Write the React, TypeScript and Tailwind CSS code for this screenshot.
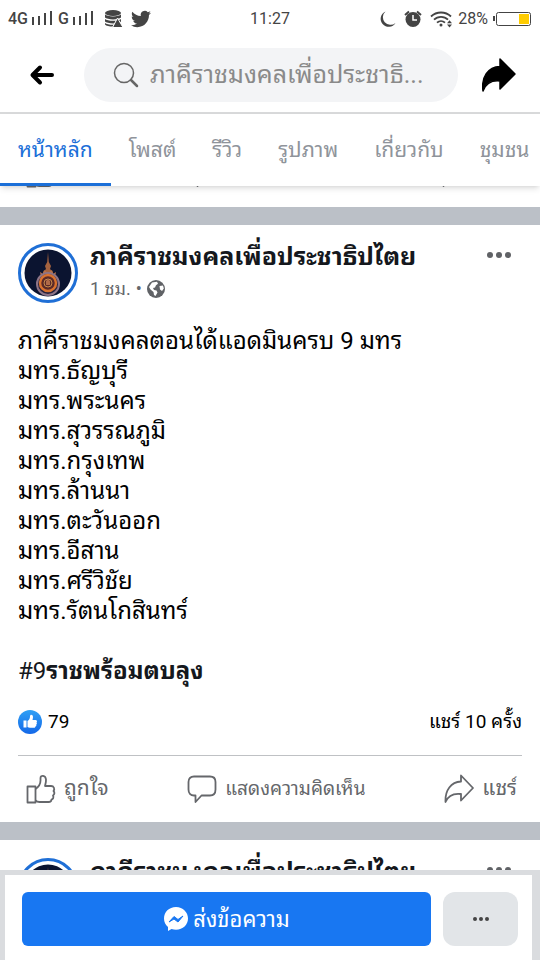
import React from "react";

const PAGE_NAME = "ภาคีราชมงคลเพื่อประชาธิปไตย";

const tabs = ["หน้าหลัก", "โพสต์", "รีวิว", "รูปภาพ", "เกี่ยวกับ", "ชุมชน"];

const campuses = [
  "มทร.ธัญบุรี",
  "มทร.พระนคร",
  "มทร.สุวรรณภูมิ",
  "มทร.กรุงเทพ",
  "มทร.ล้านนา",
  "มทร.ตะวันออก",
  "มทร.อีสาน",
  "มทร.ศรีวิชัย",
  "มทร.รัตนโกสินทร์",
];

const Signal = () => (
  <svg width="22" height="15" viewBox="0 0 22 15" fill="#444" aria-hidden="true">
    <rect x="0" y="6" width="2" height="8" />
    <rect x="6" y="5" width="2" height="9" />
    <rect x="12" y="2" width="2" height="12" />
    <rect x="18" y="0" width="2" height="14" />
  </svg>
);

const StatusBar = () => (
  <div className="grid grid-cols-[1fr_auto_1fr] items-center h-[37px] px-2 text-[#444]">
    <div className="flex items-center">
      <span className="mr-1 text-base font-medium">4G</span>
      <Signal />
      <span className="ml-1 mr-1 text-base font-medium">G</span>
      <Signal />
      <svg className="ml-[10px]" width="18" height="18" viewBox="0 0 18 18" aria-hidden="true">
        <ellipse cx="8" cy="3" rx="8" ry="3" fill="#444" />
        <path d="M0 4.6c2 2.4 14 2.4 16 0v3c-2 2.4-14 2.4-16 0zM0 9c2 2.4 14 2.4 16 0v2.6c-2 2.4-14 2.4-16 0zM0 13c2 2.4 14 2.4 16 0v1.5c-2 2.8-14 2.8-16 0z" fill="#444" />
        <path d="M12.500 8l5.500 9.500H7.500z" fill="#444" stroke="#fff" />
      </svg>
      <svg className="ml-2" width="20" height="20" viewBox="0 0 24 24" fill="#444" aria-hidden="true">
        <path d="M23.950 4.570a10 10 0 0 1-2.820.770 4.960 4.960 0 0 0 2.160-2.720c-.950.550-2 .960-3.130 1.180a4.920 4.920 0 0 0-8.380 4.480C7.690 8.090 4.070 6.130 1.640 3.160a4.820 4.820 0 0 0-.670 2.480c0 1.710.870 3.210 2.190 4.100a4.900 4.900 0 0 1-2.230-.620v.060a4.920 4.920 0 0 0 3.950 4.830 5 5 0 0 1-2.210.080 4.940 4.940 0 0 0 4.600 3.420A9.870 9.870 0 0 1 0 19.540a13.990 13.990 0 0 0 7.550 2.210c9.050 0 14-7.500 14-13.980 0-.210 0-.420-.020-.630a9.940 9.940 0 0 0 2.460-2.550z" />
      </svg>
    </div>
    <time className="text-base">11:27</time>
    <div className="flex items-center justify-end">
      <svg width="16" height="18" viewBox="0 0 16 18" fill="#444" aria-hidden="true">
        <path d="M5.500 1.500A7.500 7.500 0 0 0 15.500 13 8 8 0 1 1 5.500 1.500z" />
      </svg>
      <svg className="ml-2" width="18" height="18" viewBox="0 0 18 18" aria-hidden="true">
        <circle cx="9" cy="9.500" r="7.500" fill="#444" />
        <path d="M1 5l4-3.500M17 5l-4-3.500" stroke="#444" strokeWidth="2" />
        <path d="M9 5v5h4" fill="none" stroke="#fff" strokeWidth="1.500" />
      </svg>
      <svg className="ml-2" width="24" height="18" viewBox="0 0 24 18" fill="none" stroke="#444" strokeWidth="1.800" aria-hidden="true">
        <path d="M1 6.500a14.500 14.500 0 0 1 20 0M4 9.700a10 10 0 0 1 14 0M7 12.700a6 6 0 0 1 8 0" />
        <circle cx="11" cy="15" r="1.500" fill="#444" stroke="none" />
        <path d="M17 13.200l2.500-3 2.500 3zM17 14.500l2.500 3 2.500-3z" fill="#444" stroke="none" />
      </svg>
      <span className="ml-1 text-base">28%</span>
      <svg className="ml-1 shrink-0" width="40" height="16" viewBox="0 0 40 16" aria-hidden="true">
        <rect x="1" y="5" width="2" height="5" fill="#444" />
        <rect x="4.500" y="1.500" width="34" height="13" rx="2" fill="#fff" stroke="#444" />
        <rect x="27" y="3" width="10" height="10" fill="#fc0" />
      </svg>
    </div>
  </div>
);

const Header = () => (
  <header className="flex items-center h-[77px] pl-7 pr-6 border-b-2 border-[#d8d9da]">
    <button aria-label="Back" className="shrink-0">
      <svg width="28" height="24" viewBox="0 0 28 24" fill="none" stroke="#000" strokeWidth="4" strokeLinecap="round" strokeLinejoin="round">
        <path d="M24 12H5M12 4.500L4.500 12l7.500 7.500" />
      </svg>
    </button>
    <label className="flex flex-1 items-center min-w-0 h-[54px] ml-7 mr-6 pl-7 pr-6 rounded-full bg-[#f3f4f6]">
      <svg className="shrink-0" width="28" height="28" viewBox="0 0 28 28" fill="none" stroke="#666" strokeLinecap="round" aria-hidden="true">
        <circle cx="12" cy="12" r="9.500" strokeWidth="1.500" />
        <path d="M19 19l6 6" strokeWidth="2.500" />
      </svg>
      <input
        type="text"
        aria-label="Search"
        placeholder="ภาคีราชมงคลเพื่อประชาธิ..."
        className="flex-1 min-w-0 h-12 ml-[10px] bg-transparent text-[25px] placeholder:text-[#8a8a8a] outline-none"
      />
    </label>
    <button aria-label="Share" className="shrink-0">
      <svg width="34" height="34" viewBox="0 0 34 34" fill="#000" stroke="#000" strokeWidth="1.500" strokeLinejoin="round">
        <path d="M18 1L33 16 18 31V23C9 22 4 25 1 33 -1 19 6 9 18 8.500z" />
      </svg>
    </button>
  </header>
);

const Tabs = () => (
  <nav className="relative z-10 flex h-[72px] overflow-hidden bg-white shadow-md whitespace-nowrap text-[21px] text-[#8f949b]">
    {tabs.map((tab, index) => (
      <a
        key={tab}
        href="#"
        className={
          index === 0
            ? "flex items-center shrink-0 px-[18px] pt-1 border-b-3 border-[#1b6fd8] text-[#1b6fd8]"
            : "flex items-center shrink-0 px-[18px] pt-1 border-b-3 border-transparent"
        }
      >
        {tab}
      </a>
    ))}
  </nav>
);

const Avatar = () => (
  <svg className="shrink-0" width="60" height="60" viewBox="0 0 60 60" aria-hidden="true">
    <circle cx="30" cy="30" r="28.500" fill="#fff" stroke="#1f6fd6" strokeWidth="3" />
    <circle cx="30" cy="30" r="23.500" fill="#0b1430" />
    <path d="M30 9l.8 10 2.200 4-1 3 3 3v3H25v-3l3-3-1-3 2.200-4z" fill="#a5633f" />
    <path d="M23 34l-1-5 3 2 1-4 4 3 4-3 1 4 3-2-1 5z" fill="#b87349" />
    <circle cx="30" cy="41" r="11" fill="#29223c" stroke="#8d7487" strokeWidth="2" />
    <circle cx="30" cy="40" r="8" fill="#5b2a28" stroke="#d9722f" strokeWidth="2.500" />
    <circle cx="30" cy="40" r="4" fill="none" stroke="#c98a4b" />
    <path d="M28 42v-4l2-2 2 2v4z" fill="#b06a48" />
  </svg>
);

const Dots = () => (
  <svg width="24" height="6" viewBox="0 0 24 6" fill="#606266" aria-hidden="true">
    <circle cx="3" cy="3" r="3" />
    <circle cx="12" cy="3" r="3" />
    <circle cx="21" cy="3" r="3" />
  </svg>
);

const PostHeader = () => (
  <div className="flex items-start gap-3 px-[18px] pt-[18px]">
    <Avatar />
    <div className="flex-1 min-w-0 whitespace-nowrap">
      <h2 className="text-[25px] leading-7 font-bold text-[#15181d]">{PAGE_NAME}</h2>
      <p className="flex items-center gap-[5px] mt-1 text-lg text-[#65676b]">
        <span>1 ชม.</span>
        <span>•</span>
        <svg width="18" height="18" viewBox="0 0 18 18" aria-hidden="true">
          <circle cx="9" cy="9" r="9" fill="#606266" />
          <path d="M5 2.500l5-.8 1 2-2 1.500-1 2.300-2 .5 1 2 2.500.5 1 2-2 3.500-1.500-1-.5-3-3-2.500L2 7z" fill="#fff" />
          <path d="M12.500 6l3.500-.5.8 3-1.800 2.500-2-1.500z" fill="#fff" />
        </svg>
      </p>
    </div>
    <button aria-label="More" className="flex pt-[9px] pr-[11px]">
      <Dots />
    </button>
  </div>
);

const LikeIcon = () => (
  <svg width="30" height="30" viewBox="0 0 30 30" fill="none" stroke="#65676b" strokeWidth="1.800" strokeLinejoin="round" aria-hidden="true">
    <path d="M1.500 12.500h8v16h-8z" />
    <path d="M9.500 15c3-2 5-5 5-8.500V4c0-3 5-3 5.500 1.500.2 2-.5 4.500-1 6.500h6c3 0 4 3 2.500 5 1.500 1.500 1 3.500-.5 4.500 1 2 0 3.500-1.500 4 0 2-1.500 2.500-3 2.500h-9c-1.500 0-3-.5-4-1.500" />
  </svg>
);

const CommentIcon = () => (
  <svg width="30" height="30" viewBox="0 0 30 30" fill="none" stroke="#65676b" strokeWidth="1.800" strokeLinejoin="round" aria-hidden="true">
    <path d="M7 2.500h16c3.500 0 5.500 2 5.500 5.500v7.500c0 3.500-2 6-5.500 6h-8.500L8.500 28v-6.500H7c-3.500 0-5.500-2.500-5.500-6V8c0-3.500 2-5.500 5.500-5.500z" />
  </svg>
);

const ShareIcon = () => (
  <svg width="30" height="30" viewBox="0 0 30 30" fill="none" stroke="#65676b" strokeWidth="1.800" strokeLinejoin="round" aria-hidden="true">
    <path d="M17 1.500L29 14 17 26.500V20C9 19 4 22 1.500 28 1 16 7 8 17 7.500z" />
  </svg>
);

// what is left of the previous post under the tab bar
const ScrolledPost = () => (
  <div className="flex items-start justify-between h-[21px] pl-[26px] pr-[68px] overflow-hidden" aria-hidden="true">
    <div className="-mt-7">
      <LikeIcon />
    </div>
    <div className="-mt-7 pl-8">
      <CommentIcon />
    </div>
    <div className="-mt-7 pl-[122px]">
      <ShareIcon />
    </div>
  </div>
);

const PostActions = () => (
  <div className="flex items-center justify-between h-[66px] pl-[26px] pr-[23px] text-[21px] text-[#65676b]">
    <button className="flex items-center gap-2">
      <LikeIcon />
      <span>ถูกใจ</span>
    </button>
    <button className="flex items-center gap-2">
      <CommentIcon />
      <span className="text-[19px]">แสดงความคิดเห็น</span>
    </button>
    <button className="flex items-center gap-2">
      <ShareIcon />
      <span>แชร์</span>
    </button>
  </div>
);

const LikeBadge = () => (
  <svg width="24" height="24" viewBox="0 0 24 24" aria-hidden="true">
    <defs>
      <linearGradient id="like" x1="0" y1="0" x2="0" y2="1">
        <stop offset="0" stopColor="#2fa0f5" />
        <stop offset="1" stopColor="#1468e8" />
      </linearGradient>
    </defs>
    <circle cx="12" cy="12" r="12" fill="url(#like)" />
    <path d="M5.500 10.500h3v7h-3zM9.500 11c1.500-1 2.500-2.500 2.500-4.500 0-2.500 3-2 3 .5 0 1-.3 2-.5 3h3c1.500 0 2 1.500 1 2.500.7.800.4 1.700-.3 2.200.4 1-.1 1.600-.8 1.900 0 .900-.7 1.200-1.400 1.200h-4c-1 0-1.800-.3-2.500-.8z" fill="#fff" />
  </svg>
);

const Post = () => (
  <article>
    <PostHeader />
    <div className="px-[18px] pt-[23px] text-2xl leading-[30px] text-black">
      <p>ภาคีราชมงคลตอนได้แอดมินครบ 9 มทร</p>
      {campuses.map((campus) => (
        <p key={campus}>{campus}</p>
      ))}
      <p className="mt-[30px] text-[#15181d]">
        #9<b>ราชพร้อมตบลุง</b>
      </p>
    </div>
    <div className="flex items-center justify-between h-[70px] pt-[3px] mx-[18px] border-b border-[#bfc1c4] text-[19px] text-black">
      <span className="flex items-center gap-[6px]">
        <LikeBadge />
        79
      </span>
      <span>แชร์ 10 ครั้ง</span>
    </div>
    <PostActions />
  </article>
);

const MessageBar = () => (
  <footer className="flex shrink-0 gap-3 h-[90px] pl-[17px] pr-[14px] pt-[17px] bg-white border-t-5 border-l-5 border-r-8 border-[#dadcdf]">
    <button className="flex flex-1 items-center justify-center gap-1 h-[54px] rounded-md bg-[#1877f2] text-[22px] text-white">
      <svg width="26" height="26" viewBox="0 0 26 26" aria-hidden="true">
        <path d="M13 1C6 1 1 6 1 12.500c0 3.500 1.500 6.500 4 8.500v4l3.500-2c1.500.500 3 .700 4.500.700 7 0 12-5 12-11.200S20 1 13 1z" fill="#fff" />
        <path d="M6 16l5-5.500 4 3 5-3.500-5 6-4-3z" fill="#1877f2" stroke="#1877f2" strokeLinejoin="round" />
      </svg>
      ส่งข้อความ
    </button>
    <button aria-label="More options" className="flex items-center justify-center w-[75px] h-[54px] rounded-xl bg-[#e2e5e8]">
      <svg width="16" height="4" viewBox="0 0 16 4" fill="#444" aria-hidden="true">
        <circle cx="2" cy="2" r="2" />
        <circle cx="8" cy="2" r="2" />
        <circle cx="14" cy="2" r="2" />
      </svg>
    </button>
  </footer>
);

const App: React.FC = () => {
  return (
    <div className="flex flex-col h-screen bg-white font-['Roboto','Noto_Sans_Thai_Looped','Loma','Noto_Sans_Thai',sans-serif]">
      <StatusBar />
      <Header />
      <Tabs />
      <main className="flex-1 min-h-0 overflow-hidden">
        <ScrolledPost />
        <div className="h-[18px] bg-[#bbc0c7]" />
        <Post />
        <div className="h-[18px] bg-[#bbc0c7]" />
        <PostHeader />
      </main>
      <MessageBar />
    </div>
  );
};

export default App;
